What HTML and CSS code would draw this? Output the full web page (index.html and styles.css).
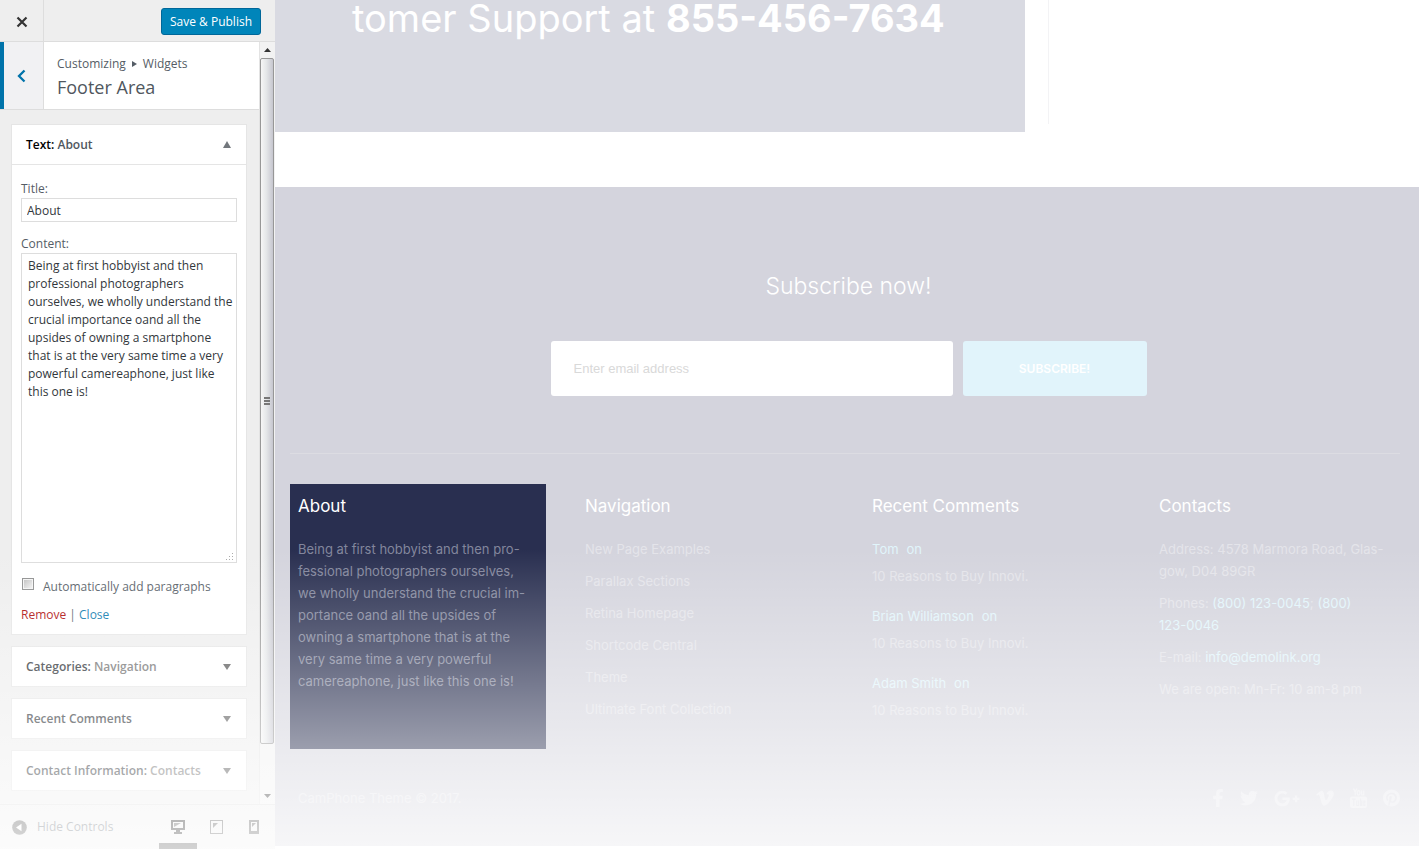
FILE: index.html
```html
<!DOCTYPE html>
<html lang="en">
<head>
<meta charset="utf-8">
<title>Customize: Footer Area</title>
<link rel="stylesheet" href="styles.css">
</head>
<body>
<div class="app">
  <aside class="sidebar">
    <header class="topbar">
      <button class="close" aria-label="Close customizer"><svg width="12" height="12" viewBox="0 0 12 12"><path d="M1.500 1.500l9 9M10.500 1.500l-9 9" stroke="#333" stroke-width="2.200" fill="none"/></svg></button>
      <button class="save">Save &amp; Publish</button>
    </header>
    <div class="scroller">
      <div class="panel">
        <div class="section-title">
          <button class="back" aria-label="Back"><svg width="9" height="14" viewBox="0 0 9 14"><path d="M7.500 1.500L2 7l5.500 5.500" stroke="#0073aa" stroke-width="2.300" fill="none"/></svg></button>
          <div class="crumbs">
            <div class="crumb">Customizing <svg class="sep" width="5" height="6" viewBox="0 0 5 6"><path d="M0 0l5 3-5 3z" fill="#555d66"/></svg> Widgets</div>
            <h1>Footer Area</h1>
          </div>
        </div>
        <div class="widgets">
          <section class="widget">
            <button class="widget-head open"><span><b class="black">Text:</b> <b class="dark">About</b></span><svg width="8" height="7" viewBox="0 0 8 7"><path d="M4 0l4 7H0z" fill="#72777c"/></svg></button>
            <form class="widget-body">
              <label for="title">Title:</label>
              <input class="text" id="title" type="text" value="About">
              <label for="content">Content:</label>
              <div class="area">
                <textarea id="content" spellcheck="false">Being at first hobbyist and then
professional photographers
ourselves, we wholly understand the
crucial importance oand all the
upsides of owning a smartphone
that is at the very same time a very
powerful camereaphone, just like
this one is!</textarea>
                <svg class="grip" width="8" height="8" viewBox="0 0 8 8" fill="#aaa"><path d="M6 0h1v1H6zM3 3h1v1H3zM6 3h1v1H6zM0 6h1v1H0zM3 6h1v1H3zM6 6h1v1H6z"/></svg>
              </div>
              <div class="check"><input type="checkbox" id="auto"><label for="auto">Automatically add paragraphs</label></div>
              <div class="actions"><a class="remove" href="#remove">Remove</a> | <a href="#close">Close</a></div>
            </form>
          </section>
          <section class="widget"><button class="widget-head"><span><b>Categories:</b> <b class="sub">Navigation</b></span><svg width="8" height="6" viewBox="0 0 8 6"><path d="M0 0h8L4 6z" fill="#555"/></svg></button></section>
          <section class="widget"><button class="widget-head"><span><b>Recent Comments</b></span><svg width="8" height="6" viewBox="0 0 8 6"><path d="M0 0h8L4 6z" fill="#555"/></svg></button></section>
          <section class="widget"><button class="widget-head"><span><b>Contact Information:</b> <b class="sub">Contacts</b></span><svg width="8" height="6" viewBox="0 0 8 6"><path d="M0 0h8L4 6z" fill="#555"/></svg></button></section>
        </div>
      </div>
      <div class="scrollbar">
        <div class="arrow"><svg width="7" height="4" viewBox="0 0 7 4"><path d="M0 4l3.500-4L7 4z" fill="#333"/></svg></div>
        <div class="thumb"><i></i><i></i><i></i></div>
        <div class="arrow"><svg width="7" height="4" viewBox="0 0 7 4"><path d="M0 0h7L3.500 4z" fill="#333"/></svg></div>
      </div>
    </div>
    <footer class="controls">
      <button class="hide"><svg width="15" height="15" viewBox="0 0 15 15"><circle cx="7.500" cy="7.500" r="7.300" fill="#444"/><path d="M9.500 3.800v7.400L4 7.500z" fill="#fff"/></svg>Hide Controls</button>
      <button class="device active" aria-label="Desktop"><svg width="16" height="15" viewBox="0 0 16 15"><path fill-rule="evenodd" fill="#000" d="M1 0h14v10h-5v2h2v2H4v-2h2v-2H1zM3 2v6h10V2z"/><path d="M4 3h7L4 7z" fill="#444"/></svg></button>
      <button class="device" aria-label="Tablet"><svg width="13" height="14" viewBox="0 0 13 14"><path fill-rule="evenodd" fill="#444" d="M0 0h13v14H0zM1 1v12h11V1z"/><path d="M3 3h5L3 8z" fill="#444"/></svg></button>
      <button class="device" aria-label="Phone"><svg width="10" height="14" viewBox="0 0 10 14"><path fill-rule="evenodd" fill="#444" d="M0 0h10v14H0zM2 2v9h6V2z"/><path d="M3 3h4L3 7z" fill="#444"/></svg></button>
    </footer>
  </aside>

  <main class="preview">
    <div class="support-row">
      <div class="support">tomer Support at <strong>855-456-7634</strong></div>
      <div class="rule"></div>
    </div>
    <div class="site-footer">
      <h2>Subscribe now!</h2>
      <form class="subscribe">
        <input type="email" aria-label="Email" placeholder="Enter email address">
        <button>SUBSCRIBE!</button>
      </form>
      <hr>
      <div class="columns">
        <section class="col about">
          <h3>About</h3>
          <p>Being at first hobbyist and then pro-<br>fessional photographers ourselves,<br>we wholly understand the crucial im-<br>portance oand all the upsides of<br>owning a smartphone that is at the<br>very same time a very powerful<br>camereaphone, just like this one is!</p>
        </section>
        <section class="col">
          <h3>Navigation</h3>
          <nav class="links"><a href="#1">New Page Examples</a><a href="#2">Parallax Sections</a><a href="#3">Retina Homepage</a><a href="#4">Shortcode Central</a><a href="#5">Theme</a><a href="#6">Ultimate Font Collection</a></nav>
        </section>
        <section class="col">
          <h3>Recent Comments</h3>
          <div class="comments">
            <div class="comment"><div class="who"><a href="#t">Tom</a><span>on</span></div><a href="#r1">10 Reasons to Buy Innovi.</a></div>
            <div class="comment"><div class="who"><a href="#b">Brian Williamson</a><span>on</span></div><a href="#r2">10 Reasons to Buy Innovi.</a></div>
            <div class="comment"><div class="who"><a href="#a">Adam Smith</a><span>on</span></div><a href="#r3">10 Reasons to Buy Innovi.</a></div>
          </div>
        </section>
        <section class="col">
          <h3>Contacts</h3>
          <div class="contacts">
            <p>Address: 4578 Marmora Road, Glas-<br>gow, D04 89GR</p>
            <p>Phones: <a href="#p1">(800) 123-0045</a>; <a href="#p2">(800)<br>123-0046</a></p>
            <p>E-mail: <a href="#mail">info@demolink.org</a></p>
            <p>We are open: Mn-Fr: 10 am-8 pm</p>
          </div>
        </section>
      </div>
      <div class="bottom">
        <span>CamPhone Theme © 2017.</span>
        <div class="social">
          <a href="#fb" aria-label="Facebook"><svg width="12" height="18" viewBox="0 0 320 512"><path d="M279.14 288l14.22-92.66h-88.91v-60.13c0-25.35 12.42-50.06 52.24-50.06h40.42V6.26S260.43 0 225.36 0c-73.22 0-121.08 44.38-121.08 124.72v70.62H22.89V288h81.39v224h100.17V288z"/></svg></a>
          <a href="#tw" aria-label="Twitter"><svg width="18" height="18" viewBox="0 0 512 512"><path d="M459.37 151.716c.325 4.548.325 9.097.325 13.645 0 138.72-105.583 298.558-298.558 298.558-59.452 0-114.68-17.219-161.137-47.106 8.447.974 16.568 1.299 25.34 1.299 49.055 0 94.213-16.568 130.274-44.832-46.132-.975-84.792-31.188-98.112-72.772 6.498.974 12.995 1.624 19.818 1.624 9.421 0 18.843-1.3 27.614-3.573-48.081-9.747-84.143-51.98-84.143-102.985v-1.299c13.969 7.797 30.214 12.67 47.431 13.319-28.264-18.843-46.781-51.005-46.781-87.391 0-19.492 5.197-37.36 14.294-52.954 51.655 63.675 129.3 105.258 216.365 109.807-1.624-7.797-2.599-15.918-2.599-24.04 0-57.828 46.782-104.934 104.934-104.934 30.213 0 57.502 12.67 76.67 33.137 23.715-4.548 46.456-13.32 66.599-25.34-7.798 24.366-24.366 44.833-46.132 57.827 21.117-2.273 41.584-8.122 60.426-16.243-14.292 20.791-32.161 39.308-52.628 54.253z"/></svg></a>
          <a href="#gp" aria-label="Google Plus"><svg width="26" height="21" viewBox="0 0 640 512"><path d="M386.061 228.496c1.834 9.692 3.143 19.384 3.143 31.956C389.204 370.205 315.599 448 204.8 448c-106.084 0-192-85.915-192-192s85.916-192 192-192c51.864 0 95.083 18.859 128.611 50.292l-52.126 50.03c-14.145-13.621-39.028-29.599-76.485-29.599-65.484 0-118.92 54.221-118.92 121.277 0 67.056 53.436 121.277 118.92 121.277 75.961 0 104.513-54.745 108.965-82.773H204.8v-66.009h181.261zm185.406 6.437V179.2h-56.001v55.733h-55.733v56.001h55.733v55.733h56.001v-55.733H627.2v-56.001h-55.733z"/></svg></a>
          <a href="#vm" aria-label="Vimeo"><svg width="18" height="20" viewBox="0 0 448 512"><path d="M447.8 153.6c-2 43.6-32.4 103.3-91.4 179.1-60.9 79.2-112.4 118.8-154.6 118.8-26.1 0-48.2-24.1-66.3-72.3C100.3 250 85.3 174.3 56.2 174.3c-3.4 0-15.1 7.1-35.2 21.1L0 168.2c51.6-45.3 100.9-95.7 131.8-98.5 34.9-3.4 56.3 20.5 64.4 71.5 28.7 181.5 41.4 208.9 93.6 126.7 18.7-29.6 28.8-52.1 30.2-67.6 4.8-45.9-35.8-42.8-63.3-31 22-72.1 64.1-107.1 126.2-105.1 45.8 1.2 67.5 31.1 64.9 89.4z"/></svg></a>
          <a href="#yt" aria-label="YouTube"><svg width="17" height="20" viewBox="0 0 17 20"><path fill="none" stroke="currentColor" stroke-width="1.300" d="M3.500.5l1.700 3.700V7.500M6.800.5L5.200 4.200M8.600 2.600c1.800 0 1.800 4.500 0 4.500s-1.800-4.500 0-4.500zM11.600 2.500v3.600c0 1.200 1.500 1 2.200 0V2.500 7.500"/><path fill-rule="evenodd" d="M2 8.500h13a2 2 0 0 1 2 2V18a2 2 0 0 1-2 2H2a2 2 0 0 1-2-2v-7.500a2 2 0 0 1 2-2zM2 10.500v1.200h1.200V18h1.200v-6.300h1.200v-1.200zM6.200 12.500V18h3v-5.500H8.100v4.400h-.8v-4.400zM10 10.500V18h2.500v-5.500h-1.400v-2zM13.200 12.500V18h2.300v-1.800h-1.200v-.7h1.200v-3z"/></svg></a>
          <a href="#pt" aria-label="Pinterest"><svg width="17" height="18" viewBox="0 0 496 512"><path d="M496 256c0 137-111 248-248 248-25.6 0-50.2-3.9-73.4-11.1 10.1-16.5 25.2-43.5 30.8-65 3-11.6 15.4-59 15.4-59 8.1 15.4 31.7 28.5 56.8 28.5 74.8 0 128.7-68.8 128.7-154.3 0-81.9-66.9-143.2-152.9-143.2-107 0-163.9 71.8-163.9 150.1 0 36.400 19.4 81.7 50.3 96.1 4.7 2.2 7.2 1.2 8.3-3.3.8-3.4 5-20.3 6.9-28.1.6-2.500.3-4.700-1.700-7.100-10.100-12.500-18.300-35.300-18.300-56.600 0-54.700 41.400-107.600 112-107.600 60.900 0 103.600 41.500 103.600 100.900 0 67.100-33.900 113.600-78 113.600-24.300 0-42.600-20.100-36.700-44.800 7-29.500 20.500-61.300 20.500-82.600 0-19-10.200-34.900-31.400-34.900-24.900 0-44.900 25.700-44.900 60.200 0 22 7.400 36.800 7.400 36.800s-24.500 103.800-29 123.200c-5 21.400-3 51.600-.9 71.200C65.400 450.900 0 361.100 0 256 0 119 111 8 248 8s248 111 248 248z"/></svg></a>
        </div>
      </div>
    </div>
  </main>
  <div class="fade"></div>
</div>
</body>
</html>
```
FILE: styles.css
```css
* { box-sizing: border-box; }
body { margin: 0; background: #fff; }
button { border: 0; background: none; padding: 0; font: inherit; color: inherit; cursor: pointer; }
h1, h2, h3, p { margin: 0; font-weight: 400; }
a { text-decoration: none; color: inherit; }
svg { display: block; flex: none; }

.app { position: relative; display: grid; grid-template-columns: 275px 1fr; height: 100vh; overflow: hidden; }
.fade { position: absolute; left: 0; right: 0; bottom: 0; height: 300px; pointer-events: none; background: linear-gradient(rgba(255,255,255,0), rgba(255,255,255,.8)); }

/* Sidebar */
.sidebar { display: flex; flex-direction: column; min-height: 0; background: #eee; color: #555d66; font: 12px/18px "Open Sans", "Noto Sans", sans-serif; }
.topbar { display: flex; justify-content: space-between; align-items: center; height: 42px; border-bottom: 1px solid #ddd; padding-right: 14px; }
.close { display: grid; place-items: center; width: 44px; height: 41px; border-right: 1px solid #ddd; padding-top: 3px; }
.save { height: 27px; margin-top: 2px; padding: 0 8px; border: 1px solid #006799; border-radius: 3px; background: #0085ba; color: #fff; }
.scroller { flex: 1; display: flex; min-height: 0; }
.panel { flex: 1; min-width: 0; overflow: hidden; }
.section-title { display: flex; background: #fff; border-bottom: 1px solid #ddd; }
.back { display: grid; place-items: center; width: 44px; border-left: 4px solid #0073aa; border-right: 1px solid #ddd; background: #f1f1f3; padding-right: 4px; }
.crumbs { padding: 13px 13px 8px; }
.crumb { display: flex; align-items: center; gap: 6px; }
h1 { font-size: 18px; line-height: 28px; color: #50575e; }
.widgets { display: grid; gap: 11px; padding: 14px 12px 0 11px; }
.widget { background: #fff; border: 1px solid #e5e5e5; }
.widget-head { display: flex; justify-content: space-between; align-items: center; width: 100%; height: 39px; padding: 0 15px 0 14px; color: #23282d; text-align: left; }
.widget-head.open { height: 40px; border-bottom: 1px solid #e5e5e5; }
.widget-head b { font-weight: 600; }
.widget-head .black { color: #000; }
.widget-head .dark { color: #50575e; }
.widget-head .sub { color: #6d6d6d; }
.widget-body { padding: 15px 9px 10px; }
.widget-body > label { display: block; }
.text { display: block; width: 100%; height: 24px; margin-bottom: 13px; padding: 0 5px; border: 1px solid #ddd; font: inherit; color: #32373c; }
.area { position: relative; }
textarea { display: block; width: 100%; height: 310px; padding: 3px 0 0 6px; border: 1px solid #ddd; resize: none; overflow: hidden; font: inherit; color: #32373c; white-space: pre; }
.grip { position: absolute; right: 3px; bottom: 2px; }
.check { display: flex; gap: 9px; margin-top: 15px; padding-left: 1px; }
.check input { appearance: none; width: 12px; height: 12px; margin: 0; border: 1px solid #8e8f8f; background: linear-gradient(135deg, #bbb, #f6f6f6); box-shadow: inset 0 0 0 1px #f4f4f4; }
.actions { margin-top: 10px; }
.actions a { color: #0073aa; }
.actions .remove { color: #a00; }

.scrollbar { display: flex; flex-direction: column; width: 16px; background: #f2f2f2; border-left: 1px solid #e3e3e3; }
.arrow { display: grid; place-items: center; height: 16px; }
.thumb { flex: 0 0 90%; display: flex; flex-direction: column; align-items: center; justify-content: center; gap: 1px; margin-right: 1px; border: 1px solid #979797; border-radius: 2px; background: linear-gradient(90deg, #f6f6f6, #e4e6e8 45%, #c6c6cf); }
.thumb i { width: 6px; height: 2px; background: #777; }
.thumb + .arrow { margin-top: auto; }

.controls { display: grid; grid-template-columns: 1fr 38px 38px 38px; height: 45px; border-top: 1px solid #ddd; padding-right: 2px; }
.hide { display: flex; align-items: center; gap: 10px; padding-left: 12px; }
.device { display: grid; place-items: center; }
.device.active { border-bottom: 6px solid #222; padding-top: 6px; }

/* Site preview */
.preview { min-width: 0; overflow: hidden; font: 13px/22px Inter, "Open Sans", sans-serif; color: #fff; }
.support-row { display: flex; gap: 23px; }
.support { flex: 0 0 750px; padding: 0 0 96px 77px; background: #d9dae2; font-size: 38px; line-height: 36px; white-space: nowrap; }
.support strong { font-weight: 700; }
.rule { border-left: 1px solid #f3f3f5; margin-bottom: 8px; }
.site-footer { margin-top: 55px; padding: 85px 12px 37px 15px; background: #d4d4dd; }
h2 { font-size: 23px; line-height: 28px; font-weight: 300; text-align: center; }
.subscribe { display: flex; justify-content: center; gap: 10px; margin-top: 41px; }
.subscribe input { width: 402px; height: 55px; padding: 0 23px; border: 0; border-radius: 3px; background: #fff; font: 13px "Liberation Sans", sans-serif; }
.subscribe input::placeholder { color: #d9d9d9; opacity: 1; }
.subscribe button { width: 184px; border-radius: 3px; background: #e1f4fb; font-size: 12px; font-weight: 600; }
hr { margin: 57px 7px 30px 0; border: 0; border-top: 1px solid #dcdce2; }
.columns { display: grid; grid-template-columns: repeat(4, 1fr); gap: 31px; }
.col { min-width: 0; padding: 9px 8px 28px; white-space: nowrap; color: #e4e4ea; }
h3 { margin-bottom: 19px; font-size: 17px; line-height: 26px; color: #fff; }
.about { background: #292f50; color: #82869c; }
.links, .contacts { display: grid; gap: 10px; }
.comments { display: grid; gap: 18px; }
.comment { display: grid; gap: 5px; }
.who { display: flex; gap: 8px; color: #e1f5fb; }
.contacts a { color: #e1f5fb; }
.bottom { display: flex; justify-content: space-between; align-items: center; margin-top: 38px; padding: 0 7px 0 8px; height: 22px; color: #e4e4ea; }
.social { display: flex; align-items: center; gap: 16px; }
.social svg { fill: currentColor; }
```
